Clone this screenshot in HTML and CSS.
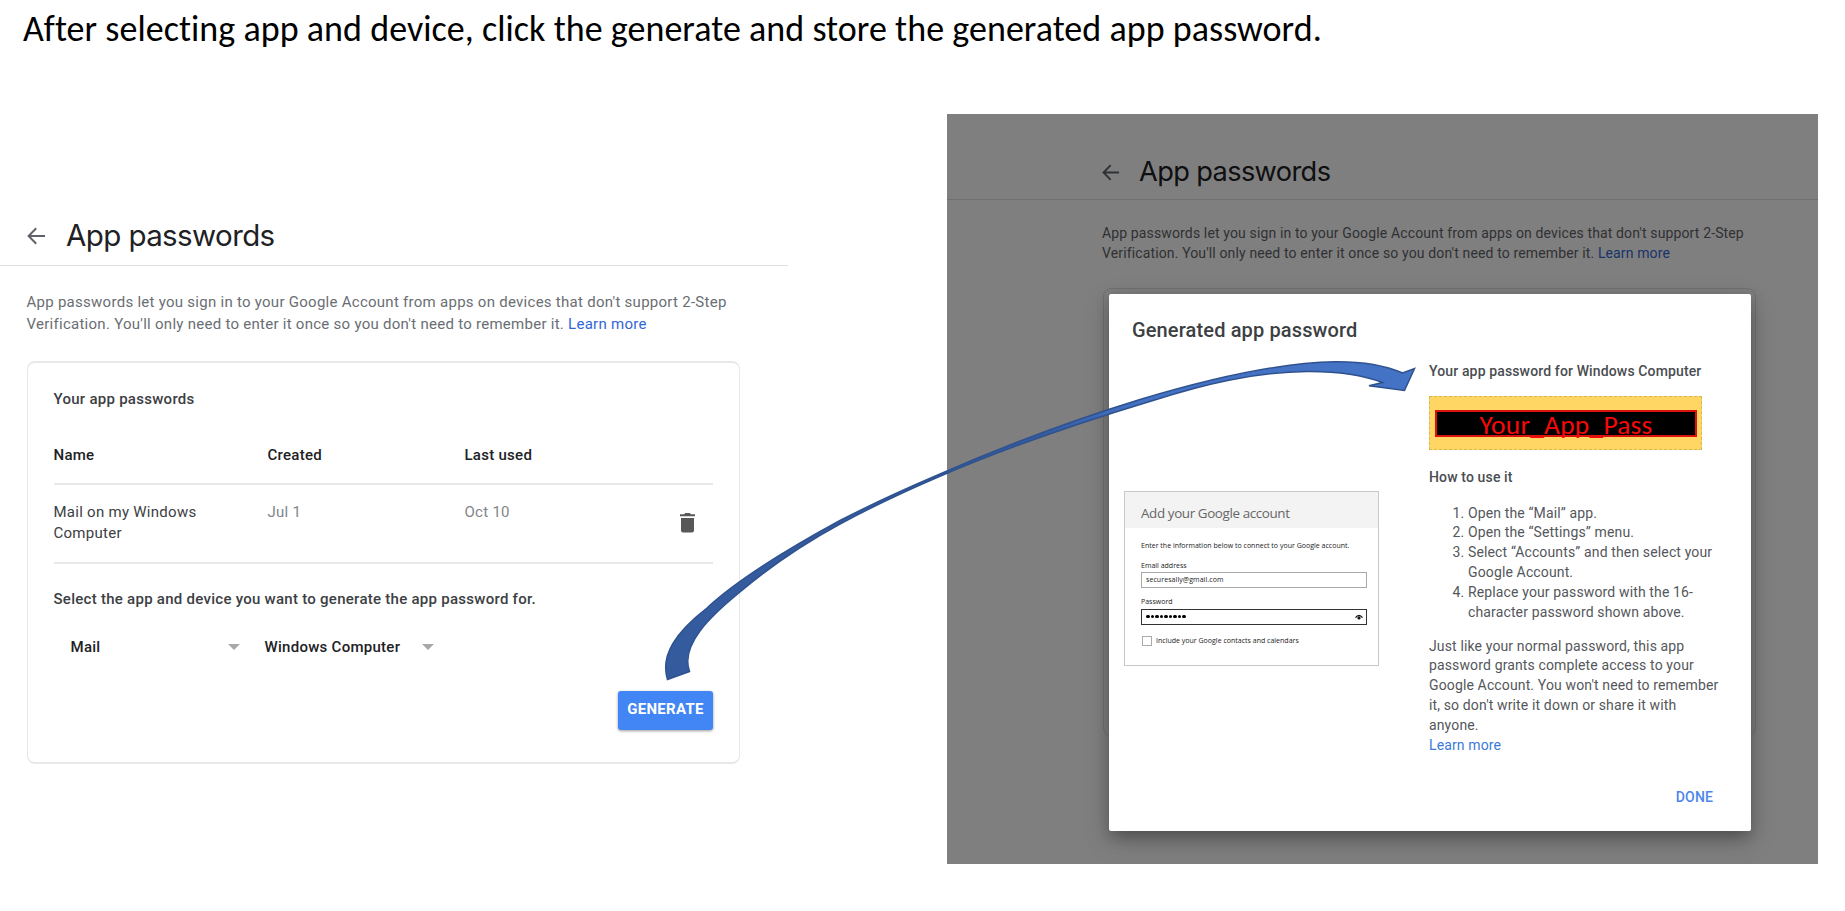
FILE: index.html
```html
<!DOCTYPE html>
<html lang="en">
<head>
<meta charset="utf-8">
<title>App passwords</title>
<link rel="stylesheet" href="styles.css">
</head>
<body>
<main class="slide">
  <h1 class="slide-title">After selecting app and device, click the generate and store the generated app password.</h1>
  <div class="stage">
    <section class="page page-left">
      <header class="page-head">
        <svg class="back" viewBox="0 0 18 18"><path d="M9.2 1.2 1.6 9l7.6 7.8M1.8 9H18" fill="none" stroke="#5f6368" stroke-width="2"/></svg>
        <h2 class="page-title">App passwords</h2>
      </header>
      <p class="intro">App passwords let you sign in to your Google Account from apps on devices that don't support 2-Step<br>Verification. You'll only need to enter it once so you don't need to remember it. <a class="link">Learn more</a></p>
      <div class="card">
        <h3 class="card-title">Your app passwords</h3>
        <div class="row row-head"><span>Name</span><span>Created</span><span>Last used</span></div>
        <div class="row row-item">
          <span class="name">Mail on my Windows<br>Computer</span><span>Jul 1</span><span>Oct 10</span>
          <svg class="trash" viewBox="0 0 15 20"><path d="M1 5h13v12.6a2 2 0 0 1-2 2H3a2 2 0 0 1-2-2zM0 1.2h4.2L5.2 0h4.6l1 1.2H15v2H0z" fill="#58585a"/></svg>
        </div>
        <p class="prompt">Select the app and device you want to generate the app password for.</p>
        <div class="selects">
          <span class="select select-app">Mail<i class="caret"></i></span>
          <span class="select select-device">Windows Computer<i class="caret"></i></span>
        </div>
        <div class="actions"><button class="generate">GENERATE</button></div>
      </div>
    </section>

    <section class="page page-right">
      <header class="page-head">
        <svg class="back" viewBox="0 0 18 18"><path d="M9.2 1.2 1.6 9l7.6 7.8M1.8 9H18" fill="none" stroke="#5f6368" stroke-width="2"/></svg>
        <h2 class="page-title">App passwords</h2>
      </header>
      <p class="intro">App passwords let you sign in to your Google Account from apps on devices that don't support 2-Step<br>Verification. You'll only need to enter it once so you don't need to remember it. <a class="link">Learn more</a></p>
      <div class="card card-empty"></div>
      <div class="scrim"></div>
      <div class="modal">
        <h3 class="modal-title">Generated app password</h3>
        <div class="modal-body">
          <div class="setup">
            <div class="setup-head">Add your Google account</div>
            <div class="setup-body">
              <p class="setup-text">Enter the information below to connect to your Google account.</p>
              <p class="setup-label">Email address</p>
              <div class="field">securesally@gmail.com</div>
              <p class="setup-label">Password</p>
              <div class="field field-focus">
                <span class="dots"><i></i><i></i><i></i><i></i><i></i><i></i><i></i><i></i><i></i></span>
                <svg class="eye" viewBox="0 0 8 6"><path d="M.5 3.6Q4-1 7.5 3.6" fill="none" stroke="#111" stroke-width="1.3"/><circle cx="4" cy="3.9" r="1.6" fill="#111"/></svg>
              </div>
              <div class="check"><i class="box"></i>Include your Google contacts and calendars</div>
            </div>
          </div>
          <div class="guide">
            <h4 class="guide-title">Your app password for Windows Computer</h4>
            <div class="pass"><div class="pass-mask"><span>Your_App_Pass</span></div></div>
            <h4 class="guide-title">How to use it</h4>
            <ol class="steps">
              <li>Open the “Mail” app.</li>
              <li>Open the “Settings” menu.</li>
              <li>Select “Accounts” and then select your<br>Google Account.</li>
              <li>Replace your password with the 16-<br>character password shown above.</li>
            </ol>
            <p class="note">Just like your normal password, this app<br>password grants complete access to your<br>Google Account. You won't need to remember<br>it, so don't write it down or share it with<br>anyone.<br><a class="note-link">Learn more</a></p>
          </div>
        </div>
        <div class="done">DONE</div>
      </div>
    </section>
  </div>
  <svg class="arrow" viewBox="0 0 1845 911">
    <defs><linearGradient id="shade" gradientUnits="userSpaceOnUse" x1="660" y1="0" x2="1420" y2="0"><stop offset="0" stop-color="#345b9e"/><stop offset=".5" stop-color="#345b9e"/><stop offset=".63" stop-color="#4472c4"/></linearGradient></defs>
    <path fill="url(#shade)" stroke="#2f528f" stroke-width="1.5" d="M667.5 679.500C660 655 676 632 707 608C739 578 795 545 840 520.500C873 503.500 906 488.500 940 474C1005 445.500 1075 419.500 1140 399.500C1215 377 1285 362.500 1335 361.800C1362 361.500 1385 365.500 1402.500 373L1414.500 368.500L1404.500 390.500L1369 385.700L1382.500 382.500C1360 374 1330 371.300 1307 371.500C1255 372 1205 384 1153 400.500C1080 422.500 1005 448.300 940 476.300C906 490.800 873 506.300 840 524C804 543.500 766 570 740 592C710 616.500 680 645 689.500 671.500Z"/>
  </svg>
</main>
</body>
</html>
```
FILE: styles.css
```css
* { box-sizing: border-box; }
body, h1, h2, h3, h4, p, ol { margin: 0; padding: 0; font-weight: 400; }
body { background: #fff; font-family: Roboto, "Liberation Sans", sans-serif; white-space: nowrap; }
i { font-style: normal; }

.slide { position: relative; width: 1845px; height: 911px; overflow: hidden; display: flex; flex-direction: column; }
.slide-title { height: 114px; padding: 7px 0 0 23px; font: 400 36px/44px Carlito, Lato, sans-serif; letter-spacing: .04px; color: #000; }
.stage { display: flex; justify-content: space-between; width: 1818px; height: 750px; }

.page { display: flex; flex-direction: column; }
.page-head { display: flex; align-items: center; border-bottom: 1px solid #dfdfdf; }
.page-title { color: #202124; font-family: Inter, Roboto, sans-serif; }
.link { color: #3367d6; }
.intro { color: #6a6e73; }
.card { border: 1px solid #e2e3e5; border-radius: 8px; }

.page-left { width: 788px; padding-top: 92px; font-size: 15px; line-height: 21.5px; letter-spacing: .27px; }
.page-left .page-head { height: 60px; padding-left: 27px; gap: 21px; }
.page-left .back { width: 18px; height: 18px; }
.page-left .page-title { margin-top: -2px; font-size: 29.5px; line-height: 36px; letter-spacing: -.6px; }
.page-left .intro { padding: 26px 0 0 26.5px; }
.page-left .card { width: 713px; height: 403px; margin: 26px 0 0 27px; padding: 25.5px 26px 0; border-width: 2px 1px; border-color: #e7e8ea; }
.page-left .card > * { margin-left: -.5px; }
.card-title { font-size: 15px; font-weight: 500; color: #3c4043; }
.row { display: grid; grid-template-columns: 214px 197px 1fr auto; border-bottom: 2px solid #e8e9ea; color: #80868b; }
.row-head { margin-top: 34.5px; padding-bottom: 17px; color: #202124; font-weight: 500; }
.row-item { height: 79px; padding-top: 16.5px; }
.name { color: #3c4043; }
.trash { width: 15px; height: 20px; margin: 11.5px 18px 0 0; }
.prompt { margin-top: 25px; font-weight: 500; color: #3c4043; }
.selects { display: flex; gap: 25px; margin-top: 26px; padding-left: 17px; color: #202124; font-weight: 500; }
.select { display: flex; align-items: center; justify-content: space-between; width: 169px; }
.caret { border: 6px solid transparent; border-top: 6px solid #a8a8a8; border-bottom: 0; }
.actions { display: flex; justify-content: flex-end; margin-top: 33px; }
.generate { width: 95px; height: 39px; padding: 0 0 3px; border: 0; border-radius: 3px; background: #4285f4; box-shadow: 0 1px 3px rgba(0,0,0,.4); color: #fff; font: 700 15px Roboto, sans-serif; letter-spacing: .3px; }

.page-right { position: relative; width: 871px; padding-top: 31px; font-size: 14px; line-height: 19.85px; letter-spacing: .135px; overflow: hidden; background: #fff; }
.page-right .page-head { height: 55px; padding: 0 0 0 155px; gap: 20px; }
.page-right .back { width: 17px; height: 17px; }
.page-right .page-title { font-size: 27.2px; line-height: 34px; letter-spacing: -.62px; }
.page-right .intro { padding: 24px 0 0 155px; color: #5f6368; }
.card-empty { width: 653px; height: 448px; margin: 24px 0 0 156px; }
.scrim { position: absolute; inset: 0; background: rgba(0,0,0,.5); }

.modal { position: absolute; left: 161.5px; top: 179.5px; width: 642px; height: 537.5px; padding: 24px 31.5px 0 23.5px; display: flex; flex-direction: column; background: #fff; border-radius: 2px; box-shadow: 0 11px 15px -7px rgba(0,0,0,.2), 0 9px 26px 3px rgba(0,0,0,.14), 0 4px 14px 2px rgba(0,0,0,.13); color: #54575b; }
.modal-title { height: 43px; font-size: 20px; line-height: 24px; font-weight: 500; color: #3c4043; }
.modal-body { display: flex; height: 406px; }
.guide { margin-left: 50px; }
.guide-title { font-size: 14px; line-height: 20px; font-weight: 500; color: #4a4d51; }
.pass { width: 273px; height: 54px; margin: 15.5px 0 17px; padding: 13px 4px 12px 5px; background: #ffd663; border: 1px dashed #d8b650; }
.pass-mask { height: 27px; background: #000; border: 2px solid #d9140c; display: flex; justify-content: center; align-items: center; color: #f80808; font: 400 27.5px/27px Carlito, Lato, sans-serif; letter-spacing: .2px; }
.pass-mask span { padding-top: 2px; }
.steps { margin-top: 16.5px; padding-left: 39px; }
.note { margin-top: 14px; }
.note-link { color: #3b7ad9; }
.done { align-self: flex-end; margin: 21.5px 6px 0 0; color: #4d86ec; font-weight: 500; }

.setup { width: 255px; height: 175px; margin: 130.5px 0 0 -8px; border: 1px solid #c8c8c8; font: 400 7px/10px "Open Sans", sans-serif; letter-spacing: .01px; color: #222; }
.setup-head { height: 36px; padding-left: 16px; background: #f3f3f3; font-size: 13.4px; line-height: 43px; font-weight: 400; letter-spacing: -.38px; color: #666; }
.setup-body { padding: 12.500px 11px 0 16px; }
.setup-label { margin: 10px 0 1.5px; }
.field + .setup-label { margin-top: 9px; }
.field { height: 16px; padding-left: 4px; border: 1px solid #aaa; line-height: 14px; letter-spacing: .08px; display: flex; justify-content: space-between; align-items: center; }
.field-focus { border-color: #333; }
.dots { display: flex; gap: 1px; }
.dots i { width: 3.5px; height: 3.5px; border-radius: 50%; background: #000; }
.eye { width: 8px; height: 6px; margin-right: 3px; }
.check { display: flex; align-items: center; gap: 4px; margin: 11px 0 0 1px; }
.box { width: 10px; height: 10px; border: 1px solid #aaa; }

.arrow { position: absolute; left: 0; top: 0; width: 1845px; height: 911px; }
```
